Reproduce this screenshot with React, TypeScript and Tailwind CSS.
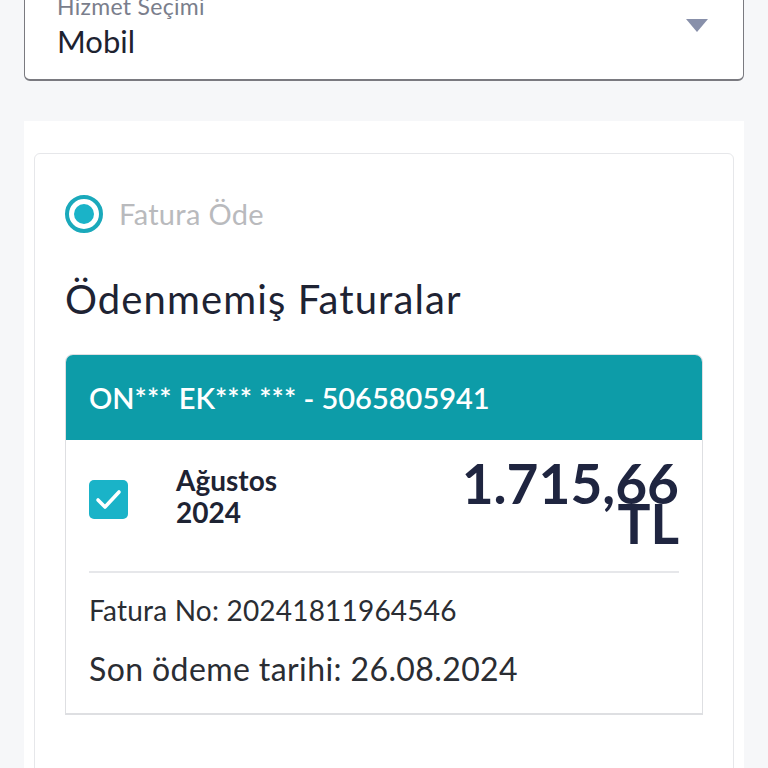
import React from "react";

export default function App() {
  const font = { fontFamily: "Lato, 'Noto Sans', sans-serif" };
  return (
    <div className="w-[768px] h-[768px] overflow-hidden bg-[#f6f7f9]" style={font}>
      {/* Select */}
      <div className="mx-[24px] -mt-[20px] h-[101px] bg-white border border-[#7a7a80] border-b-2 rounded-[6px] relative">
        <div className="pl-[32px] pt-[12px] text-[23px] leading-[26px] text-[#7a7e8c] tracking-[0.3px]">Hizmet Seçimi</div>
        <div className="pl-[32px] pt-[4px] text-[31px] leading-[36px] text-[#1d2230]">Mobil</div>
        <svg className="absolute right-[35px] top-[38px]" width="22" height="13" viewBox="0 0 22 13">
          <path d="M0 0 H22 L11 13 Z" fill="#8890aa" />
        </svg>
      </div>
      {/* Panel */}
      <div className="mx-[24px] mt-[40px] h-[700px] bg-white px-[10px] pt-[32px]">
        <div className="h-[700px] border border-[#e6e7ea] rounded-[6px] pl-[30px] pr-[30px] pt-[41px]">
          <div className="flex items-center gap-[16px]">
            <div className="w-[38px] h-[38px] rounded-full border-[4px] border-[#1aa9bb] flex items-center justify-center">
              <div className="w-[20px] h-[20px] rounded-full bg-[#1ab3c8]" />
            </div>
            <span className="text-[29px] text-[#b9babd] leading-[38px] tracking-[0.3px]">Fatura Öde</span>
          </div>
          <div className="mt-[43px] text-[40px] leading-[46px] text-[#1e2333] tracking-[1.1px]">Ödenmemiş Faturalar</div>
          <div className="mt-[32px] border border-[#dedfe2] border-b-2 rounded-t-[8px] overflow-hidden">
            <div className="h-[85px] bg-[#0d9ca8] flex items-center pl-[23px] text-white text-[29px] font-semibold">
              ON*** EK*** *** - 5065805941
            </div>
            <div className="px-[23px]">
              <div className="flex items-start pt-[18px] h-[131px]">
                <div className="mt-[22px] w-[39px] h-[39px] rounded-[5px] bg-[#1ab3c8] flex items-center justify-center">
                  <svg width="39" height="39" viewBox="0 0 39 39">
                    <path d="M9 20 L16 27 L30 12" stroke="white" strokeWidth="3.6" fill="none" strokeLinecap="round" strokeLinejoin="round" />
                  </svg>
                </div>
                <div className="ml-[48px] mt-[6px] text-[28px] leading-[32px] font-bold text-[#1e2333]">
                  <div>Ağustos</div>
                  <div>2024</div>
                </div>
                <div className="ml-auto text-right text-[55px] leading-[40px] font-bold text-[#1f2540] w-[230px] pt-[5px]">
                  1.715,66 TL
                </div>
              </div>
              <div className="h-[2px] bg-[#e6e7ea]" />
              <div className="pt-[21px] text-[28px] leading-[32px] text-[#2a2d33] tracking-[0.2px]">Fatura No: 20241811964546</div>
              <div className="pt-[24px] pb-[25px] text-[32px] leading-[38px] text-[#2a2d33] tracking-[0.4px]">Son ödeme tarihi: 26.08.2024</div>
            </div>
          </div>
        </div>
      </div>
    </div>
  );
}
